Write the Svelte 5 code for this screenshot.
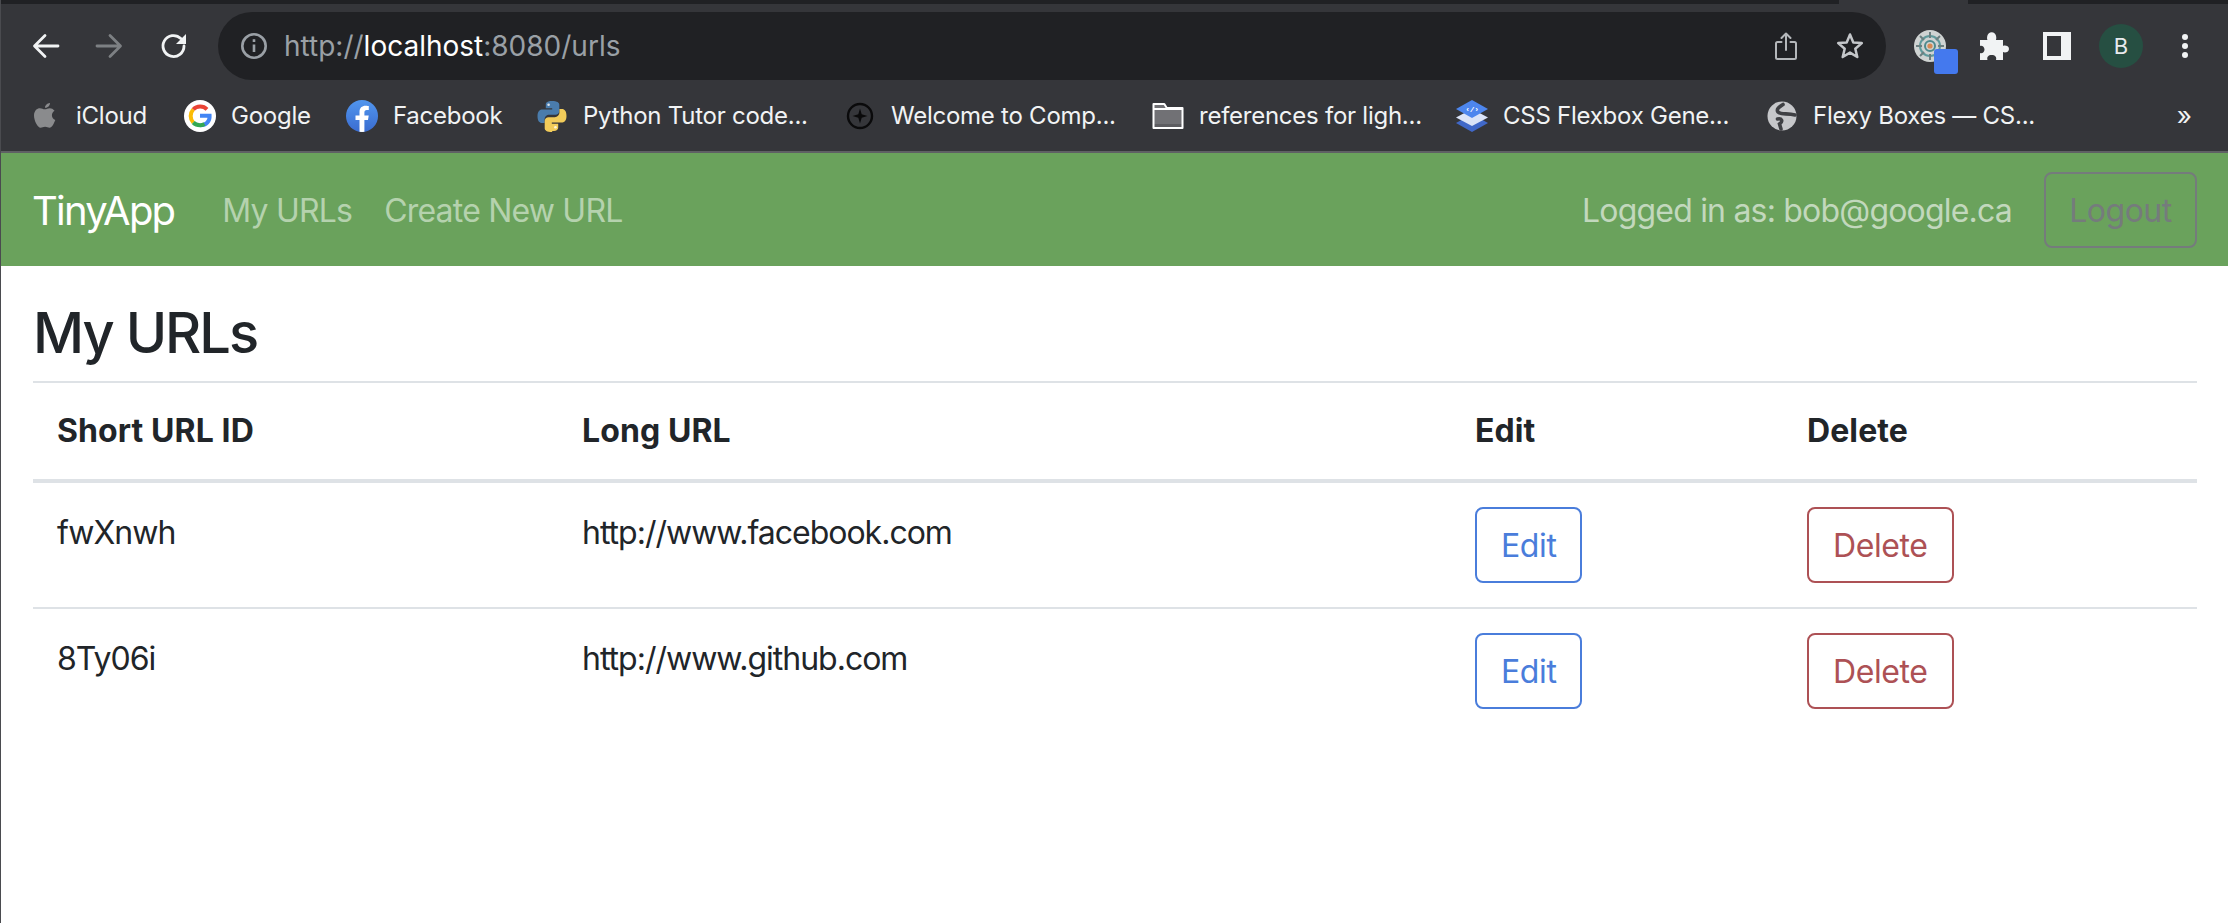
<script>
  const bookmarks = [
    { name: 'iCloud', icon: 'apple', w: 155 },
    { name: 'Google', icon: 'google', w: 162 },
    { name: 'Facebook', icon: 'facebook', w: 190 },
    { name: 'Python Tutor code...', icon: 'python', w: 308 },
    { name: 'Welcome to Comp...', icon: 'compass', w: 308 },
    { name: 'references for ligh...', icon: 'folder', w: 304 },
    { name: 'CSS Flexbox Gene...', icon: 'layers', w: 310 },
    { name: 'Flexy Boxes — CS...', icon: 'globe', w: 300 }
  ];

  const urls = [
    { id: 'fwXnwh', long: 'http://www.facebook.com' },
    { id: '8Ty06i', long: 'http://www.github.com' }
  ];
</script>

<div class="page">
  <header class="chrome">
    <div class="tabstrip"><span class="tab-gap"></span></div>
    <div class="toolbar">
      <svg class="nav-icon" viewBox="0 0 28 28" fill="none" stroke="#f1f3f4" stroke-width="2.8" stroke-linecap="round" stroke-linejoin="round"><path d="M26 14H3M13 3.500 2.500 14 13 24.500"/></svg>
      <svg class="nav-icon dim" viewBox="0 0 28 28" fill="none" stroke="#7d8083" stroke-width="2.8" stroke-linecap="round" stroke-linejoin="round"><path d="M2 14h23M15 3.500 25.500 14 15 24.500"/></svg>
      <svg class="nav-icon" viewBox="0 0 28 28" fill="none"><path d="M24 14a10.500 10.500 0 1 1-3.200-7.500" stroke="#f1f3f4" stroke-width="2.8" stroke-linecap="round"/><path d="M26 2v10H16z" fill="#f1f3f4"/></svg>
      <div class="omnibox">
        <svg class="info" viewBox="0 0 28 28" fill="none" stroke="#9aa0a6" stroke-width="2.6"><circle cx="14" cy="14" r="11.700"/><path d="M14 12.500V20" /><path d="M14 7.200v2.800"/></svg>
        <span class="url"><span class="muted">http://</span>localhost<span class="muted">:8080/urls</span></span>
        <svg class="omni-share" viewBox="0 0 22 28" fill="none" stroke="#b4b7ba" stroke-width="2" stroke-linecap="round" stroke-linejoin="round"><path d="M6.500 10H2.500a1.500 1.500 0 0 0-1.500 1.500v14A1.500 1.500 0 0 0 2.500 27h17a1.500 1.500 0 0 0 1.500-1.500v-14a1.500 1.500 0 0 0-1.500-1.500h-4M11 18V1.500M6.500 6 11 1.500 15.500 6"/></svg>
        <svg class="omni-star" viewBox="0 0 28 28" fill="none" stroke="#c4c7ca" stroke-width="2.5" stroke-linejoin="round"><path d="m14 2.500 3.300 7.900 8.500.7-6.500 5.600 2 8.300-7.300-4.400-7.300 4.400 2-8.300-6.500-5.600 8.500-.7z"/></svg>
      </div>
      <div class="extensions">
        <span class="ext">
          <svg viewBox="0 0 32 32" fill="none">
            <circle cx="16" cy="16" r="16" fill="#cfd3d2"/>
            <circle cx="16" cy="16" r="10" stroke="#5f9a9c" stroke-width="2"/>
            <circle cx="16" cy="16" r="5" stroke="#4d8a8e" stroke-width="2"/>
            <circle cx="16" cy="16" r="2.600" fill="#d58a55"/>
            <path d="M16 2v6M16 24v6M2 16h6M24 16h6M6 6l4 4M22 22l4 4M26 6l-4 4M6 26l4-4" stroke="#6c7f80" stroke-width="2"/>
          </svg>
          <span class="badge"></span>
        </span>
        <svg class="puzzle" viewBox="0 0 29 28"><path fill="#f1f3f4" d="M0 8h7.500C6.500 6.500 7 .2 11.700 .2S16.900 6.500 15.900 8H23v6c1.500-1 6-.5 6 3s-4.500 4-6 3v8h-7c1-3-1-5-4.300-5S6.500 25 7.500 28H0v-7c2 1 4.500-1 4.500-3.500S2 13 0 14z"/></svg>
        <span class="panel"></span>
        <span class="avatar">B</span>
        <span class="dots"><i></i><i></i><i></i></span>
      </div>
    </div>
    <nav class="bookmarks">
      {#each bookmarks as b}
        <a class="bookmark" href="#top" style="width: {b.w}px">
          {#if b.icon === 'apple'}
            <svg viewBox="0 0 32 32"><path fill="#8a8b8d" d="M21 3c.2 2-1.800 5-5 4.800C15.800 5.600 18 3.300 21 3zM16 9.300c1.400 0 2.800-1.100 4.800-1.100 1.600 0 3.500.8 4.700 2.500-3.800 2.300-3.200 7.800.8 9.300-1.300 3.300-3.400 7.800-5.700 7.800-1.700 0-2.500-1-4.500-1s-2.900 1-4.500 1c-3 0-6.600-7.200-6.600-12.300 0-4.800 3-7.300 5.900-7.300 2 0 3.400 1.100 4.600 1.100z"/></svg>
          {:else if b.icon === 'google'}
            <svg viewBox="0 0 32 32" fill="none">
              <circle cx="16" cy="16" r="16" fill="#fff"/>
              <path d="M16 15.800h9.600c.3 5.500-3.500 9.400-9.100 9.400" stroke="#4285f4" stroke-width="4"/>
              <path d="M23 9.300A9.600 9.600 0 0 0 9.200 9.500" stroke="#ea4335" stroke-width="4"/>
              <path d="M9.200 9.500a9.600 9.600 0 0 0 0 13" stroke="#fbbc05" stroke-width="4"/>
              <path d="M9.200 22.500c2 2 4.500 2.800 7.300 2.700 1.500-.1 2.800-.5 4-1.200" stroke="#34a853" stroke-width="4"/>
            </svg>
          {:else if b.icon === 'facebook'}
            <svg viewBox="0 0 32 32">
              <defs>
                <clipPath id="fb-clip"><circle cx="16" cy="16" r="16"/></clipPath>
                <linearGradient id="fb-fill" x1="0" y1="0" x2="0" y2="1"><stop offset="0" stop-color="#5196ee"/><stop offset="1" stop-color="#3a6cd0"/></linearGradient>
              </defs>
              <circle cx="16" cy="16" r="16" fill="url(#fb-fill)"/>
              <path clip-path="url(#fb-clip)" fill="#fff" d="M13.500 32V20H9.500v-4.600h4v-3.500c0-4 2.400-6.200 6-6.200 1.700 0 3.300.3 3.300.3v3.900h-1.900c-1.900 0-2.500 1.200-2.500 2.400v3.100h4.300l-.7 4.600h-3.600v12z"/>
            </svg>
          {:else if b.icon === 'python'}
            <svg viewBox="0 0 32 32">
              <path fill="#4a7cac" d="M15.800 1c-6 0-6 2.600-6 3.800v3.400h6.400v1.200H6.400C4 9.400 1.500 11 1.500 16s2 7 4.400 7h2.700v-3.600c0-2.500 2.100-4.600 4.600-4.600h6.300c2 0 3.800-1.700 3.800-3.800V4.800C23.300 2.700 21.300 1 15.800 1z"/>
              <circle cx="12.600" cy="4.700" r="1.300" fill="#dfe6ee"/>
              <path fill="#f2cc5a" d="M16.200 31c6 0 6-2.600 6-3.800v-3.400h-6.400v-1.200h9.800c2.400 0 4.900-1.600 4.900-6.600s-2-7-4.400-7h-2.700v3.600c0 2.500-2.100 4.600-4.600 4.600h-6.300c-2 0-3.800 1.700-3.800 3.800v7.200c0 2.100 2 3.800 7.500 3.800z"/>
              <circle cx="19.400" cy="27.300" r="1.300" fill="#fff7dc"/>
            </svg>
          {:else if b.icon === 'compass'}
            <svg viewBox="0 0 32 32"><circle cx="16" cy="16" r="12" fill="none" stroke="#0a0a0b" stroke-width="2.400"/><path fill="#0a0a0b" d="m16 8.500 1.700 5.800 5.800 1.700-5.800 1.700-1.700 5.800-1.700-5.800-5.800-1.700 5.800-1.700z"/></svg>
          {:else if b.icon === 'folder'}
            <svg viewBox="0 0 32 32"><path fill="#717175" d="M2 5h10l3 4h15v18H2z"/><path fill="#5d5d61" d="M2 24h28v3H2z"/><path fill="none" stroke="#fff" stroke-width="2" stroke-linejoin="round" d="M1.500 4h10.800l2.500 4h15.700v20h-29zM1.500 9h28.500"/></svg>
          {:else if b.icon === 'layers'}
            <svg viewBox="0 0 32 32">
              <path fill="#4068c8" d="M16 14 32 23 16 32 0 23z"/>
              <path fill="#dbe4f8" d="M16 9 32 17.500 16 26 0 17.500z"/>
              <path fill="#4d86ee" d="M16 0 32 9 16 18 0 9z"/>
              <text x="16" y="12" text-anchor="middle" font-size="8" font-family="Liberation Mono, monospace" font-weight="700" fill="#fff">‹/›</text>
            </svg>
          {:else}
            <svg viewBox="0 0 32 32" fill="none"><circle cx="16" cy="16" r="14.500" fill="#c6c7ca"/><path stroke="#3f4044" stroke-width="3.600" stroke-linecap="round" d="M17 4.500C13 7 10 9 12 12c3 3 9 1 17 3M11.500 19c4-1 6 2 2 5l1.500 5"/></svg>
          {/if}
          <span>{b.name}</span>
        </a>
      {/each}
      <span class="more">»</span>
    </nav>
  </header>

  <nav class="navbar">
    <a class="brand" href="#top">TinyApp</a>
    <a class="nav-link" href="#top">My URLs</a>
    <a class="nav-link" href="#top">Create New URL</a>
    <span class="user">Logged in as: bob@google.ca</span>
    <button class="logout">Logout</button>
  </nav>

  <main class="content">
    <h3>My URLs</h3>
    <table>
      <colgroup><col class="c1" /><col class="c2" /><col class="c3" /><col /></colgroup>
      <thead>
        <tr><th>Short URL ID</th><th>Long URL</th><th>Edit</th><th>Delete</th></tr>
      </thead>
      <tbody>
        {#each urls as u}
          <tr>
            <td class="text">{u.id}</td>
            <td class="text">{u.long}</td>
            <td><button class="btn edit">Edit</button></td>
            <td><button class="btn delete">Delete</button></td>
          </tr>
        {/each}
      </tbody>
    </table>
  </main>
</div>

<style>
  :global(body) {
    margin: 0;
    background: #fff;
  }

  .page {
    height: 923px;
    overflow: hidden;
    border-left: 1px solid #4a4b4f;
    font-family: Inter, "Liberation Sans", sans-serif;
    color: #212529;
  }

  .chrome {
    background: #35363a;
    height: 153px;
    box-sizing: border-box;
    border-bottom: 2px solid #5f6064;
    color: #fff;
  }

  .tabstrip {
    height: 4px;
    background: #202124;
    padding-left: 1838px;
  }

  .tab-gap {
    display: block;
    width: 129px;
    height: 4px;
    background: #35363a;
  }

  .toolbar {
    height: 76px;
    display: flex;
    align-items: center;
    padding-top: 8px;
    box-sizing: border-box;
  }

  .nav-icon {
    width: 28px;
    height: 28px;
    margin-left: 31px;
    flex: none;
  }

  .nav-icon.dim {
    margin-left: 35px;
  }

  .nav-icon.dim + .nav-icon {
    margin-left: 37px;
  }

  .omnibox {
    margin-left: 30px;
    width: 1668px;
    height: 68px;
    border-radius: 34px;
    background: #202124;
    display: flex;
    align-items: center;
    flex: none;
    box-sizing: border-box;
    padding-left: 22px;
  }

  .info {
    width: 28px;
    height: 28px;
    flex: none;
  }

  .url {
    margin-left: 16px;
    font-size: 28px;
    color: #fff;
    flex: 1;
  }

  .muted {
    color: #9aa0a6;
  }

  .omni-share {
    width: 22px;
    height: 28px;
    flex: none;
  }

  .omni-star {
    width: 28px;
    height: 28px;
    margin-left: 39px;
    margin-right: 22px;
    flex: none;
  }

  .extensions {
    display: flex;
    align-items: center;
    padding-left: 28px;
  }

  .ext {
    position: relative;
    width: 32px;
    height: 32px;
    flex: none;
  }

  .ext svg {
    display: block;
    width: 32px;
    height: 32px;
  }

  .badge {
    position: absolute;
    left: 20px;
    top: 19px;
    width: 24px;
    height: 25px;
    border-radius: 3px;
    background: #4479ee;
  }

  .puzzle {
    width: 29px;
    height: 28px;
    margin-left: 34px;
    flex: none;
  }

  .panel {
    width: 28px;
    height: 28px;
    margin-left: 34px;
    box-sizing: border-box;
    flex: none;
    border: 4px solid #f1f3f4;
    border-right-width: 10px;
    background: #35363a;
  }

  .avatar {
    width: 44px;
    height: 44px;
    margin-left: 28px;
    border-radius: 50%;
    background: #264f42;
    color: #e8eaed;
    font-size: 22px;
    display: flex;
    align-items: center;
    justify-content: center;
    flex: none;
  }

  .dots {
    margin-left: 39px;
    display: flex;
    flex-direction: column;
    gap: 3px;
  }

  .dots i {
    display: block;
    width: 6px;
    height: 6px;
    border-radius: 50%;
    background: #f1f3f4;
  }

  .bookmarks {
    height: 71px;
    display: flex;
    align-items: center;
    padding: 0 36px 0 20px;
    box-sizing: border-box;
  }

  .bookmark {
    display: flex;
    align-items: center;
    gap: 15px;
    box-sizing: border-box;
    padding-left: 8px;
    color: #f1f3f4;
    text-decoration: none;
    font-size: 24px;
    letter-spacing: -0.25px;
    white-space: nowrap;
    flex: none;
  }

  .bookmark svg {
    width: 32px;
    height: 32px;
    flex: none;
  }

  .more {
    margin-left: auto;
    font-size: 26px;
    color: #f1f3f4;
  }

  .navbar {
    height: 113px;
    background: #6aa25c;
    display: flex;
    align-items: center;
    padding: 0 31px;
    box-sizing: border-box;
    font-size: 32px;
    letter-spacing: -0.8px;
  }

  .brand {
    color: #fff;
    font-size: 40px;
    letter-spacing: -1.8px;
    text-decoration: none;
    margin-right: 48px;
    padding-top: 2px;
  }

  .nav-link {
    color: #b5d2ae;
    text-decoration: none;
    margin-right: 32px;
    padding-top: 2px;
  }

  .user {
    margin-left: auto;
    color: #c2d8bd;
    padding-top: 2px;
  }

  .logout {
    margin-left: 32px;
    width: 153px;
    height: 76px;
    font: inherit;
    letter-spacing: -0.5px;
    color: #757b7c;
    background: transparent;
    border: 2px solid #757b7c;
    border-radius: 8px;
    padding: 2px 0 0;
  }

  .content {
    padding: 0 31px 0 32px;
  }

  h3 {
    margin: 0;
    padding: 34px 0 14px;
    font-size: 56px;
    line-height: 67px;
    font-weight: 500;
    letter-spacing: -2px;
  }

  table {
    width: 100%;
    table-layout: fixed;
    border-collapse: collapse;
    font-size: 32px;
    line-height: 48px;
    border-top: 2px solid #dee2e6;
  }

  .c1 {
    width: 525px;
  }

  .c2 {
    width: 893px;
  }

  .c3 {
    width: 332px;
  }

  th {
    text-align: left;
    font-weight: 700;
    letter-spacing: 0.1px;
    padding: 24px;
    border-bottom: 4px solid #dee2e6;
  }

  td {
    padding: 24px;
    vertical-align: top;
    letter-spacing: -1px;
    border-bottom: 2px solid #dee2e6;
  }

  td.text {
    padding-top: 26px;
    padding-bottom: 22px;
  }

  tr:last-child td {
    border-bottom: none;
  }

  .btn {
    display: block;
    height: 76px;
    padding: 2px 24px 0;
    background: #fff;
    border-radius: 8px;
    font: inherit;
    letter-spacing: -0.4px;
    border: 2px solid;
  }

  .edit {
    color: #4a7ddb;
    border-color: #4a7ddb;
  }

  .delete {
    color: #ad5155;
    border-color: #ad5155;
  }
</style>
